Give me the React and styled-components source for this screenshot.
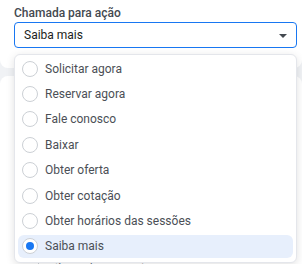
import React from 'react';
import styled, { createGlobalStyle } from 'styled-components';

const GlobalStyle = createGlobalStyle`
  html, body {
    margin: 0;
    padding: 0;
    background: #f0f2f5;
    overflow: hidden;
  }
  body {
    font-family: Roboto, "Liberation Sans", Arial, sans-serif;
  }
`;

const options = [
  'Solicitar agora',
  'Reservar agora',
  'Fale conosco',
  'Baixar',
  'Obter oferta',
  'Obter cotação',
  'Obter horários das sessões',
  'Saiba mais',
];

const Page = styled.div`
  display: flex;
  flex-direction: column;
  gap: 8px;
  width: 302px;
  height: 264px;
  position: relative;
`;

const Card = styled.div`
  background: #fff;
  border-radius: ${p => (p.$top ? '0 0 8px 8px' : '8px 8px 0 0')};
  padding: ${p => (p.$top ? '4px 5px 20px 14px' : '0 5px 0 38px')};
  height: ${p => (p.$top ? '68px' : 'auto')};
  box-sizing: border-box;
  flex: ${p => (p.$top ? 'none' : '1')};
  display: flex;
  flex-direction: column;
  justify-content: ${p => (p.$top ? 'flex-start' : 'flex-end')};
`;

const Label = styled.div`
  font-size: 12px;
  font-weight: 500;
  color: #444950;
  line-height: 18px;
`;

const Select = styled.div`
  position: relative;
  display: flex;
  align-items: center;
  justify-content: space-between;
  height: 26px;
  box-sizing: border-box;
  border: 1px solid #1877f2;
  border-radius: 4px;
  padding: 0 9px 0 9px;
  font-size: 12px;
  color: #1c1e21;
`;

const Caret = styled.span`
  width: 0;
  height: 0;
  border-left: 4px solid transparent;
  border-right: 4px solid transparent;
  border-top: 4px solid #444950;
  margin-top: 1px;
`;

const Menu = styled.div`
  position: absolute;
  top: 54px;
  left: 14px;
  width: 283px;
  box-sizing: border-box;
  padding: 1px 3px 3px;
  background: #fff;
  border: 1px solid #e4e6eb;
  border-radius: 6px;
  box-shadow: 0 2px 8px rgba(0, 0, 0, 0.12);
  z-index: 2;
`;

const Option = styled.div`
  display: flex;
  align-items: center;
  gap: 7px;
  height: 25.4px;
  box-sizing: border-box;
  padding: 0 4px;
  font-size: 12px;
  color: #4b4f56;
  border-radius: 6px;
  background: ${p => (p.$selected ? '#e7effc' : 'transparent')};
  margin: ${p => (p.$selected ? '1px 0' : '0')};
  height: ${p => (p.$selected ? '23.4px' : '25.4px')};
`;

const Radio = styled.span`
  width: 16px;
  height: 16px;
  box-sizing: border-box;
  border-radius: 50%;
  border: 1px solid #ccd0d5;
  background: #fff;
  display: flex;
  align-items: center;
  justify-content: center;
  flex: none;
  &::after {
    content: '';
    width: 8px;
    height: 8px;
    border-radius: 50%;
    background: ${p => (p.$checked ? '#1877f2' : 'transparent')};
  }
`;

const Input = styled.div`
  border-left: 1px solid #ccd0d5;
  padding: 0 0 0 7px;
  height: 12px;
  font-size: 11px;
  line-height: 16px;
  color: #606770;
  overflow: hidden;
  white-space: nowrap;
`;

export default function App() {
  return (
    <Page>
      <GlobalStyle />
      <Card $top>
        <Label>Chamada para ação</Label>
        <Select>
          Saiba mais
          <Caret />
        </Select>
      </Card>
      <Card>
        <Input>digital expert online/</Input>
      </Card>
      <Menu>
        {options.map(o => (
          <Option key={o} $selected={o === 'Saiba mais'}>
            <Radio $checked={o === 'Saiba mais'} />
            {o}
          </Option>
        ))}
      </Menu>
    </Page>
  );
}
